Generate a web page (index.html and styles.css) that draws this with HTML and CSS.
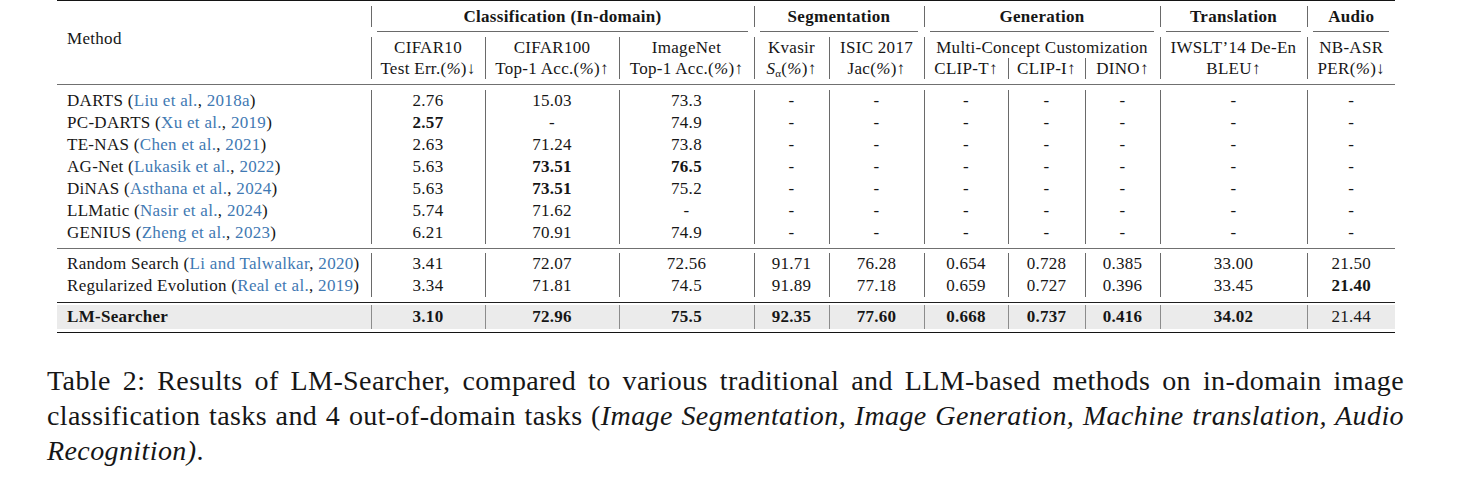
FILE: index.html
```html
<!DOCTYPE html>
<html>
<head>
<meta charset="utf-8">
<link rel="stylesheet" href="styles.css">
</head>
<body>
<table class="results">
  <colgroup>
    <col class="c-method"><col class="c-cifar10"><col class="c-cifar100"><col class="c-imagenet">
    <col class="c-kvasir"><col class="c-isic"><col class="c-clipt"><col class="c-clipi"><col class="c-dino">
    <col class="c-bleu"><col class="c-audio">
  </colgroup>
  <tr class="rule-row top"><td colspan="11"><div class="rule thick"></div></td></tr>
  <tr class="hrow">
    <td class="method-head" rowspan="4">Method</td>
    <td class="vl grp" colspan="3">Classification (In-domain)</td>
    <td class="vl grp" colspan="2">Segmentation</td>
    <td class="vl grp" colspan="3">Generation</td>
    <td class="vl grp">Translation</td>
    <td class="vl grp">Audio</td>
  </tr>
  <tr class="cmid-row">
    <td colspan="3"><div class="cmid"></div></td>
    <td colspan="2"><div class="cmid"></div></td>
    <td colspan="3"><div class="cmid"></div></td>
    <td><div class="cmid"></div></td>
    <td><div class="cmid"></div></td>
  </tr>
  <tr class="hrow">
    <td class="vl">CIFAR10</td>
    <td class="vl">CIFAR100</td>
    <td class="vl">ImageNet</td>
    <td class="vl">Kvasir</td>
    <td class="vl">ISIC 2017</td>
    <td class="vl" colspan="3">Multi-Concept Customization</td>
    <td class="vl">IWSLT’14 De-En</td>
    <td class="vl">NB-ASR</td>
  </tr>
  <tr class="hrow">
    <td class="vl">Test Err.(<span class="m">%</span>)↓</td>
    <td class="vl">Top-1 Acc.(<span class="m">%</span>)↑</td>
    <td class="vl">Top-1 Acc.(<span class="m">%</span>)↑</td>
    <td class="vl"><i>S</i><sub>α</sub>(<span class="m">%</span>)↑</td>
    <td class="vl">Jac(<span class="m">%</span>)↑</td>
    <td class="vl">CLIP-T↑</td>
    <td class="vl">CLIP-I↑</td>
    <td class="vl">DINO↑</td>
    <td class="vl">BLEU↑</td>
    <td class="vl">PER(<span class="m">%</span>)↓</td>
  </tr>
  <tr class="rule-row mid1"><td colspan="11"><div class="rule gray"></div></td></tr>

  <tr class="drow"><td class="name">DARTS (<span class="cite">Liu et al.</span>, <span class="cite">2018a</span>)</td><td class="vl">2.76</td><td class="vl">15.03</td><td class="vl">73.3</td><td class="vl">-</td><td class="vl">-</td><td class="vl">-</td><td class="vl">-</td><td class="vl">-</td><td class="vl">-</td><td class="vl">-</td></tr>
  <tr class="drow"><td class="name">PC-DARTS (<span class="cite">Xu et al.</span>, <span class="cite">2019</span>)</td><td class="vl"><b>2.57</b></td><td class="vl">-</td><td class="vl">74.9</td><td class="vl">-</td><td class="vl">-</td><td class="vl">-</td><td class="vl">-</td><td class="vl">-</td><td class="vl">-</td><td class="vl">-</td></tr>
  <tr class="drow"><td class="name">TE-NAS (<span class="cite">Chen et al.</span>, <span class="cite">2021</span>)</td><td class="vl">2.63</td><td class="vl">71.24</td><td class="vl">73.8</td><td class="vl">-</td><td class="vl">-</td><td class="vl">-</td><td class="vl">-</td><td class="vl">-</td><td class="vl">-</td><td class="vl">-</td></tr>
  <tr class="drow"><td class="name">AG-Net (<span class="cite">Lukasik et al.</span>, <span class="cite">2022</span>)</td><td class="vl">5.63</td><td class="vl"><b>73.51</b></td><td class="vl"><b>76.5</b></td><td class="vl">-</td><td class="vl">-</td><td class="vl">-</td><td class="vl">-</td><td class="vl">-</td><td class="vl">-</td><td class="vl">-</td></tr>
  <tr class="drow"><td class="name">DiNAS (<span class="cite">Asthana et al.</span>, <span class="cite">2024</span>)</td><td class="vl">5.63</td><td class="vl"><b>73.51</b></td><td class="vl">75.2</td><td class="vl">-</td><td class="vl">-</td><td class="vl">-</td><td class="vl">-</td><td class="vl">-</td><td class="vl">-</td><td class="vl">-</td></tr>
  <tr class="drow"><td class="name">LLMatic (<span class="cite">Nasir et al.</span>, <span class="cite">2024</span>)</td><td class="vl">5.74</td><td class="vl">71.62</td><td class="vl">-</td><td class="vl">-</td><td class="vl">-</td><td class="vl">-</td><td class="vl">-</td><td class="vl">-</td><td class="vl">-</td><td class="vl">-</td></tr>
  <tr class="drow"><td class="name">GENIUS (<span class="cite">Zheng et al.</span>, <span class="cite">2023</span>)</td><td class="vl">6.21</td><td class="vl">70.91</td><td class="vl">74.9</td><td class="vl">-</td><td class="vl">-</td><td class="vl">-</td><td class="vl">-</td><td class="vl">-</td><td class="vl">-</td><td class="vl">-</td></tr>

  <tr class="rule-row mid2"><td colspan="11"><div class="rule gray"></div></td></tr>

  <tr class="drow"><td class="name">Random Search (<span class="cite">Li and Talwalkar</span>, <span class="cite">2020</span>)</td><td class="vl">3.41</td><td class="vl">72.07</td><td class="vl">72.56</td><td class="vl">91.71</td><td class="vl">76.28</td><td class="vl">0.654</td><td class="vl">0.728</td><td class="vl">0.385</td><td class="vl">33.00</td><td class="vl">21.50</td></tr>
  <tr class="drow"><td class="name">Regularized Evolution (<span class="cite">Real et al.</span>, <span class="cite">2019</span>)</td><td class="vl">3.34</td><td class="vl">71.81</td><td class="vl">74.5</td><td class="vl">91.89</td><td class="vl">77.18</td><td class="vl">0.659</td><td class="vl">0.727</td><td class="vl">0.396</td><td class="vl">33.45</td><td class="vl"><b>21.40</b></td></tr>

  <tr class="rule-row mid3"><td colspan="11"><div class="rule dark"></div></td></tr>

  <tr class="drow ours"><td class="name"><b>LM-Searcher</b></td><td class="vl"><b>3.10</b></td><td class="vl"><b>72.96</b></td><td class="vl"><b>75.5</b></td><td class="vl"><b>92.35</b></td><td class="vl"><b>77.60</b></td><td class="vl"><b>0.668</b></td><td class="vl"><b>0.737</b></td><td class="vl"><b>0.416</b></td><td class="vl"><b>34.02</b></td><td class="vl">21.44</td></tr>

  <tr class="rule-row bottom"><td colspan="11"><div class="rule thick"></div></td></tr>
</table>

<p class="caption">Table 2: Results of LM-Searcher, compared to various traditional and LLM-based methods on in-domain image classification tasks and 4 out-of-domain tasks (<i>Image Segmentation, Image Generation, Machine translation, Audio Recognition)</i>.</p>
</body>
</html>
```

FILE: styles.css
```css
html, body {
  margin: 0;
  padding: 0;
  background: #ffffff;
}

body {
  font-family: "Liberation Serif", "Times New Roman", serif;
  color: #161616;
}

.results {
  margin-left: 57px;
  width: 1338px;
  table-layout: fixed;
  border-collapse: collapse;
  border-spacing: 0;
  font-size: 17px;
  letter-spacing: 0.3px;
}

.c-method { width: 314px; }
.c-cifar10 { width: 114px; }
.c-cifar100 { width: 134px; }
.c-imagenet { width: 135px; }
.c-kvasir { width: 75px; }
.c-isic { width: 95px; }
.c-clipt { width: 84px; }
.c-clipi { width: 77px; }
.c-dino { width: 75px; }
.c-bleu { width: 147px; }
.c-audio { width: 88px; }

.results td {
  padding: 0;
  text-align: center;
  vertical-align: middle;
  white-space: nowrap;
}

.vl {
  border-left: 1px solid #6a6a6a;
}

.rule-row td {
  vertical-align: top;
  font-size: 0;
  line-height: 0;
}

.rule-row.top td { height: 6px; }
.rule-row.mid1 td { height: 11px; padding-top: 5px; box-sizing: border-box; }
.rule-row.mid2 td { height: 9px; padding-top: 4px; box-sizing: border-box; }
.rule-row.mid3 td { height: 8px; padding-top: 5px; box-sizing: border-box; }
.rule-row.bottom td { height: 6px; padding-top: 3px; box-sizing: border-box; }

.rule { height: 0; }
.rule.thick { border-top: 1.5px solid #141414; }
.rule.gray { border-top: 1px solid #707070; }
.rule.dark { border-top: 1px solid #1e1e1e; }

.hrow td {
  height: 21px;
  line-height: 21px;
}

.grp {
  font-weight: bold;
}

.method-head {
  text-align: left !important;
  padding-left: 10px !important;
  padding-bottom: 9px !important;
}

.cmid-row td {
  height: 10px;
  padding: 0;
  vertical-align: top;
  font-size: 0;
  line-height: 0;
}

.cmid {
  margin: 4px 6px 0 6px;
  border-top: 1px solid #6a6a6a;
  height: 0;
}

.drow td {
  height: 22px;
  line-height: 22px;
}

.drow td.name {
  text-align: left;
  padding-left: 10px;
}

.cite {
  color: #3f79b3;
}

.ours td {
  height: 24px;
  line-height: 24px;
  background: #ebebeb;
}

.ours td.vl {
  border-left-color: #8c8c8c;
}

.m {
  font-style: italic;
}

sub {
  font-size: 11px;
  line-height: 0;
  vertical-align: -3px;
}

.caption {
  margin: 28px 0 0 47px;
  width: 1357px;
  font-size: 28px;
  letter-spacing: 0.4px;
  line-height: 35px;
  text-align: justify;
}
```
